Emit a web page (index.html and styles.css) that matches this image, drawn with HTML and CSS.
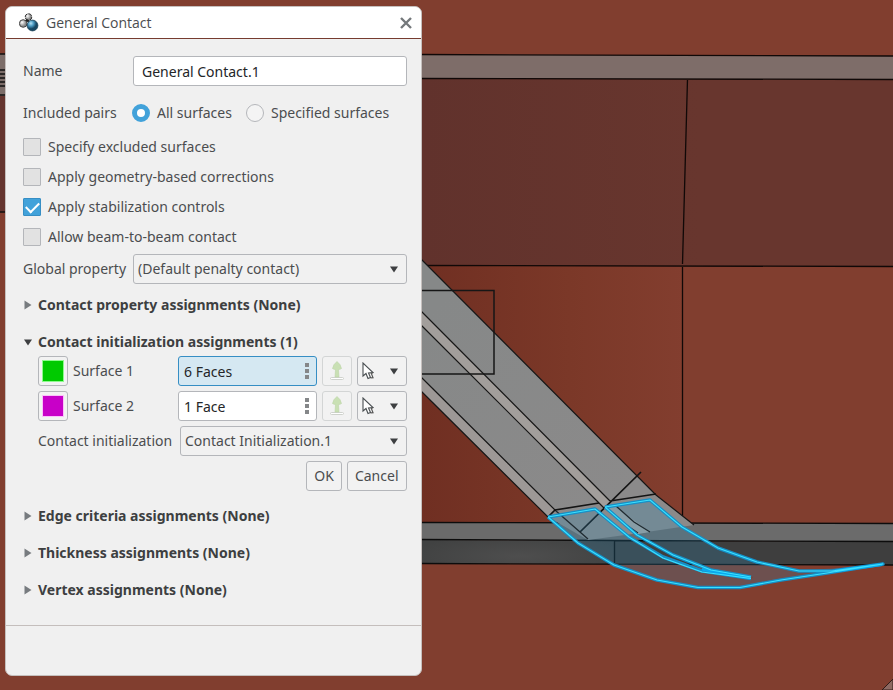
FILE: index.html
```html
<!DOCTYPE html>
<html lang="en">
<head>
<meta charset="utf-8">
<meta name="viewport" content="width=device-width, initial-scale=1">
<title>General Contact</title>
<link rel="stylesheet" href="styles.css">
</head>
<body>
<svg class="scene" viewBox="0 0 893 690" preserveAspectRatio="xMinYMin slice" aria-hidden="true">
  <defs>
    <linearGradient id="shade" x1="422" x2="690" y1="0" y2="0" gradientUnits="userSpaceOnUse">
      <stop offset="0" stop-color="#702f22"/><stop offset=".55" stop-color="#7b3828"/><stop offset="1" stop-color="#833e2f"/>
    </linearGradient>
    <linearGradient id="panel" x1="422" x2="700" y1="0" y2="0" gradientUnits="userSpaceOnUse">
      <stop offset="0" stop-color="#61322c"/><stop offset="1" stop-color="#68362e"/>
    </linearGradient>
    <linearGradient id="beam" x1="440" x2="620" y1="300" y2="500" gradientUnits="userSpaceOnUse">
      <stop offset="0" stop-color="#868888"/><stop offset="1" stop-color="#8b8a8a"/>
    </linearGradient>
    <radialGradient id="under" cx="520" cy="556" r="110" gradientUnits="userSpaceOnUse" gradientTransform="translate(0 445) scale(1 .2)">
      <stop offset="0" stop-color="#4e4e4e"/><stop offset="1" stop-color="#414242"/>
    </radialGradient>
  </defs>
  <rect width="893" height="690" fill="#813e2f"/>
  <rect y="96" width="10" height="116" fill="#65352f"/>
  <path d="M0 54h10v42H0z" fill="#7c6d69"/>
  <path d="M0 54h10M0 70h10M0 74h10M0 78h10M0 82h10M0 86h10M0 95h10M0 212h10" stroke="#111" stroke-width="1.5"/>
  <path d="M420 266H683V523H420z" fill="url(#shade)"/>
  <path d="M420 54.500L893 56V80L420 78.500z" fill="#7e6d69"/>
  <path d="M420 78.500L893 80V266.500L420 265z" fill="url(#panel)"/>
  <path d="M420 54.500L893 56M420 78.500L893 79.500M420 265.500L893 266.500M687.500 79L682.500 264M682.500 267V516" stroke="#100807" stroke-width="1.300" fill="none"/>
  <path d="M420 522.500L893 523.500V542L420 540z" fill="#6b6b6b"/>
  <path d="M420 540L893 542V565L420 563z" fill="#3e3e3e"/>
  <path d="M420 540L614 541V564L420 563z" fill="url(#under)"/>
  <path d="M420 522.500L893 523.500M420 539.500L614 540.500L893 541.500M420 563.500L893 565M614.500 541v23" stroke="#0c0c0c" stroke-width="1.300" fill="none"/>
  <path d="M420 258L656 495L694 525L640 533L588 540L548 517L420 388z" fill="url(#beam)"/>
  <path d="M420 310L610 501L604 508L420 324z" fill="#a29e9b"/>
  <path d="M420 376L556 511L548 517L420 390z" fill="#9d9896"/>
  <path d="M420 258L656 495L694 525M420 310L610 501M420 324L604 508M420 376L556 511M420 390L548 517" stroke="#171717" stroke-width="1.200" fill="none"/>
  <path d="M420 290.500H494V374H420" stroke="#161616" stroke-width="1.500" fill="none"/>
  <path d="M548 517L555 510L599 503M610 501L656 494M641 472L580 532" stroke="#141414" stroke-width="1.700" fill="none"/>
  <path d="M605 507H616L650 532L638 534z" fill="#a5a3a1"/>
  <path d="M548 517L595 509L640 543L673 561L712 573L751 579L753 577L714 570L676 556L637 532L605 507L650 500L682 527L718 548L757 562L799 571L883 564L800 576L740 588H698L657 580L614 565L578 543z" fill="#3089b7" fill-opacity=".24"/>
  <path d="M556 511L588 539M616 506L634 522L650 532M605 508L622 522L638 533" stroke="#202b31" stroke-width="1.300" fill="none"/>
  <g fill="none" stroke-linejoin="round">
    <path d="M548 517L595 509L629 537L663 557L702 571L751 578.500M605 507L650 500L682 527L718 548L757 562L799 571L832 571L883 564L827 573L781 580L740 587.500H698L657 580L614 565L578 543L548 517M605 507L637 535L673 555L711 570L751 577" stroke="#168fc7" stroke-width="3.500"/>
    <path d="M702 569L726 574L750 578M835 571L882 564.500" stroke="#0aa9ee" stroke-width="3"/>
    <path d="M548 517L595 509L629 537L663 558L702 572L751 578.500M605 507L650 500L682 527L718 548L757 562L799 571L832 571L883 564L827 573L781 580L740 587.500H698L657 580L614 565L578 543L548 517M605 507L637 535L673 555L711 570L751 577" stroke="#3be2ff" stroke-width="1.100"/>
  </g>
  <path d="M882 690L893 679V690z" fill="#8d6962" stroke="#301b17"/>
</svg>

<svg class="symbols" aria-hidden="true">
  <symbol id="caret" viewBox="0 0 10 7"><path d="M1 .5h8L5 6.500z"/></symbol>
  <symbol id="twist" viewBox="0 0 8 10"><path d="M0.500 .5v9L7.500 5z"/></symbol>
  <symbol id="up" viewBox="0 0 16 20"><rect x="1.500" y="16.500" width="13" height="2" rx="1" fill="#fff" stroke="#cfd2cd"/><path d="M8 .5Q11.500 3 12.500 7.500Q11 8.500 9.500 8.500L10 16H6l.5-7.500Q5 8.500 3.500 7.500Q4.500 3 8 .5z" fill="#c9e0b4" stroke="#bcd4a7" stroke-width=".6"/></symbol>
  <symbol id="pick" viewBox="0 0 12 18"><path d="M1 1v13l3-2.500 2 5 2.500-1-2-4.500 4.500-.5z" fill="#fff" stroke="#4a4f52" stroke-width="1.100"/><path d="M8.500 15.800l2.500-.2-1.600-4 1.500-1" fill="none" stroke="#555" stroke-width="1.200"/></symbol>
</svg>

<main class="dialog" role="dialog" aria-labelledby="dialog-title">
  <header class="titlebar">
    <svg class="app-icon" viewBox="0 0 20 19" aria-hidden="true">
      <defs>
        <radialGradient id="ball" cx=".35" cy=".3"><stop offset="0" stop-color="#b9e2f3"/><stop offset=".5" stop-color="#4c9cc4"/><stop offset="1" stop-color="#164763"/></radialGradient>
        <radialGradient id="steel" cx=".35" cy=".35"><stop offset="0" stop-color="#fff"/><stop offset="1" stop-color="#8a8a8a"/></radialGradient>
      </defs>
      <circle cx="9.500" cy="4" r="3.300" fill="url(#steel)" stroke="#333" stroke-dasharray="4 1"/>
      <circle cx="4.200" cy="10.500" r="3.800" fill="url(#steel)" stroke="#444"/>
      <path d="M7 7l3 1.500" stroke="#222" stroke-width="2"/>
      <circle cx="13.500" cy="12.500" r="5.400" fill="url(#ball)" stroke="#1d4257" stroke-width=".8"/>
    </svg>
    <h1 class="title" id="dialog-title">General Contact</h1>
    <button class="close" type="button" aria-label="Close"><svg viewBox="0 0 12 12"><path d="M1 1l10 10M11 1L1 11"/></svg></button>
  </header>

  <form class="content">
    <div class="row name-row">
      <label class="lead" for="name">Name</label>
      <input class="field name-field" id="name" type="text" value="General Contact.1">
    </div>
    <fieldset class="row pairs">
      <legend class="pairs-label">Included pairs</legend>
      <label class="choice"><input class="radio" type="radio" name="pairs" checked>All surfaces</label>
      <label class="choice"><input class="radio" type="radio" name="pairs">Specified surfaces</label>
    </fieldset>
    <div class="checks">
      <label class="choice"><input class="check" type="checkbox">Specify excluded surfaces</label>
      <label class="choice"><input class="check" type="checkbox">Apply geometry-based corrections</label>
      <label class="choice"><input class="check" type="checkbox" checked>Apply stabilization controls</label>
      <label class="choice"><input class="check" type="checkbox">Allow beam-to-beam contact</label>
    </div>
    <div class="row global-row">
      <label class="lead" for="global">Global property</label>
      <span class="picker">
        <select class="field" id="global"><option>(Default penalty contact)</option></select>
        <svg class="caret"><use href="#caret"/></svg>
      </span>
    </div>

    <button class="section" type="button" aria-expanded="false"><svg class="twist"><use href="#twist"/></svg>Contact property assignments (None)</button>
    <button class="section" type="button" aria-expanded="true"><svg class="twist open"><use href="#caret"/></svg>Contact initialization assignments (1)</button>
    <div class="assignment">
      <div class="row">
        <button class="square" type="button" aria-label="Surface 1 color"><span class="swatch green"></span></button>
        <label class="surface-label" for="s1">Surface 1</label>
        <span class="picker">
          <input class="field active" id="s1" type="text" value="6 Faces">
          <span class="dots"></span>
        </span>
        <button class="square" type="button" aria-label="Reference surface 1" disabled><svg class="up"><use href="#up"/></svg></button>
        <button class="tool" type="button" aria-label="Selection mode for surface 1"><svg class="pick"><use href="#pick"/></svg><svg class="tool-caret"><use href="#caret"/></svg></button>
      </div>
      <div class="row">
        <button class="square" type="button" aria-label="Surface 2 color"><span class="swatch magenta"></span></button>
        <label class="surface-label" for="s2">Surface 2</label>
        <span class="picker">
          <input class="field" id="s2" type="text" value="1 Face">
          <span class="dots"></span>
        </span>
        <button class="square" type="button" aria-label="Reference surface 2" disabled><svg class="up"><use href="#up"/></svg></button>
        <button class="tool" type="button" aria-label="Selection mode for surface 2"><svg class="pick"><use href="#pick"/></svg><svg class="tool-caret"><use href="#caret"/></svg></button>
      </div>
      <div class="row">
        <label class="init-label" for="init">Contact initialization</label>
        <span class="picker">
          <select class="field" id="init"><option>Contact Initialization.1</option></select>
          <svg class="caret"><use href="#caret"/></svg>
        </span>
      </div>
      <div class="actions">
        <button class="action" type="button">OK</button>
        <button class="action" type="button">Cancel</button>
      </div>
    </div>
    <button class="section" type="button" aria-expanded="false"><svg class="twist"><use href="#twist"/></svg>Edge criteria assignments (None)</button>
    <button class="section" type="button" aria-expanded="false"><svg class="twist"><use href="#twist"/></svg>Thickness assignments (None)</button>
    <button class="section" type="button" aria-expanded="false"><svg class="twist"><use href="#twist"/></svg>Vertex assignments (None)</button>
  </form>
  <footer class="footer"></footer>
</main>
</body>
</html>
```
FILE: styles.css
```css
* { box-sizing: border-box; }

body {
  margin: 0;
  min-height: 100vh;
  overflow: hidden;
  background: #813e2f;
  color: #4b4d4f;
  font: 14px/20px "Noto Sans", "Open Sans", sans-serif;
}

button, input, select { font: inherit; color: inherit; margin: 0; }
button { padding: 0; border: 0; background: none; }
svg { display: block; flex: none; }

.scene { position: absolute; inset: 0; width: 100%; height: 100%; }
.symbols { position: absolute; width: 0; height: 0; }

.dialog {
  position: relative;
  width: calc(50% - 30px);
  min-width: 400px;
  max-width: 480px;
  margin: 6px 5px;
  display: flow-root;
  background: #f0f0f0;
  border: 1px solid #c5bfbd;
  border-radius: 7px;
  overflow: hidden;
}

.titlebar {
  display: flex;
  align-items: center;
  height: 32px;
  padding: 0 8px 0 13px;
  background: #fff;
  border-bottom: 1px solid #763c30;
}
.app-icon { width: 20px; height: 19px; }
.title { flex: 1; margin: 0 0 0 7px; font-size: 14px; font-weight: 400; font-family: "Open Sans", sans-serif; }
.close { width: 13px; height: 13px; }
.close svg { width: 12px; height: 12px; stroke: #74787b; stroke-width: 2.4; }

.content { padding: 17px 14px 8px 17px; }
.row { display: flex; align-items: center; }
.lead { flex: 0 0 110px; white-space: nowrap; }

.field {
  flex: 1;
  width: 100%;
  min-width: 0;
  height: 30px;
  padding: 0 5px;
  border: 1px solid #b4b6ba;
  border-radius: 3px;
  background: #fff;
  color: #242628;
  outline: 0;
}
.name-field { padding: 0 8px; }
.field.active { background: #d5e8f2; border-color: #368ec4; }
select.field { appearance: none; background: #f1f1f1; color: #4b4d4f; padding: 0 4px; }

.picker { position: relative; flex: 1; display: flex; min-width: 0; }
.caret { position: absolute; right: 8px; top: 12px; width: 10px; height: 7px; fill: #3d3f41; pointer-events: none; }

.pairs { margin: 16px 0 0; padding: 0; border: 0; height: 22px; }
.pairs-label { float: left; width: 109px; padding: 0; }
.choice { display: flex; align-items: center; white-space: nowrap; }
.pairs .choice { margin-right: 14px; }

.radio, .check { appearance: none; flex: none; width: 18px; height: 18px; border: 1px solid #b4b6ba; }
.radio { margin-right: 7px; border-radius: 50%; background: #f4f4f4; }
.radio:checked { border: 5px solid #42a2da; background: #fff; }
.check { margin-right: 7px; border-radius: 1px; background: #e2e2e2; display: grid; place-items: center; }
.check:checked { background: #42a2da; border-color: #368ec4; }
.check:checked::after {
  content: "";
  width: 11px;
  height: 6px;
  margin-top: -3px;
  border: solid #fff;
  border-width: 0 0 2px 2px;
  transform: rotate(-45deg);
}

.checks { margin: 8px 0 2px; }
.checks .choice { height: 30px; }
.global-row { margin-bottom: 11px; }

.section {
  display: flex;
  align-items: center;
  width: 100%;
  height: 20px;
  margin-bottom: 17px;
  color: #3d3f41;
  font-weight: 700;
  text-align: left;
  white-space: nowrap;
}
.twist { width: 8px; height: 10px; margin: 0 6px 0 1px; fill: #777b7f; }
.twist.open { width: 10px; height: 7px; margin: 0 5px 0 0; fill: #3d3f41; }

.section[aria-expanded="true"] { margin-bottom: 4px; }
.assignment { display: grid; gap: 5px; padding-left: 15px; margin-bottom: 15px; }
.square, .tool, .action { height: 30px; border: 1px solid #b4b6ba; border-radius: 3px; background: #f2f2f2; }
.square { flex: none; display: grid; place-items: center; width: 30px; }
.square:disabled { margin-left: 5px; border-color: #d3d5d5; }
.swatch { width: 22px; height: 22px; border: 1px solid; }
.green { background: #00ca00; border-color: #8dfa8d; background-clip: padding-box; }
.magenta { background: #c800c8; border-color: #fac0fa; background-clip: padding-box; }
.surface-label { flex: 0 0 110px; padding-left: 5px; }
.dots {
  position: absolute;
  right: 8px;
  top: 7px;
  width: 4px;
  height: 16px;
  background: repeating-linear-gradient(#858789 0 4px, transparent 4px 6px);
}
.up { width: 16px; height: 20px; }
.tool { flex: none; display: flex; align-items: center; justify-content: space-between; width: 50px; margin-left: 5px; padding: 0 7px 0 4px; }
.pick { width: 12px; height: 18px; }
.tool-caret { width: 10px; height: 7px; fill: #3d3f41; }
.init-label { flex: 0 0 142px; white-space: nowrap; }
.actions { display: flex; justify-content: flex-end; gap: 5px; }
.action { padding: 0 7px; }

.footer { height: 50px; border-top: 1px solid #c4bebc; }
```
